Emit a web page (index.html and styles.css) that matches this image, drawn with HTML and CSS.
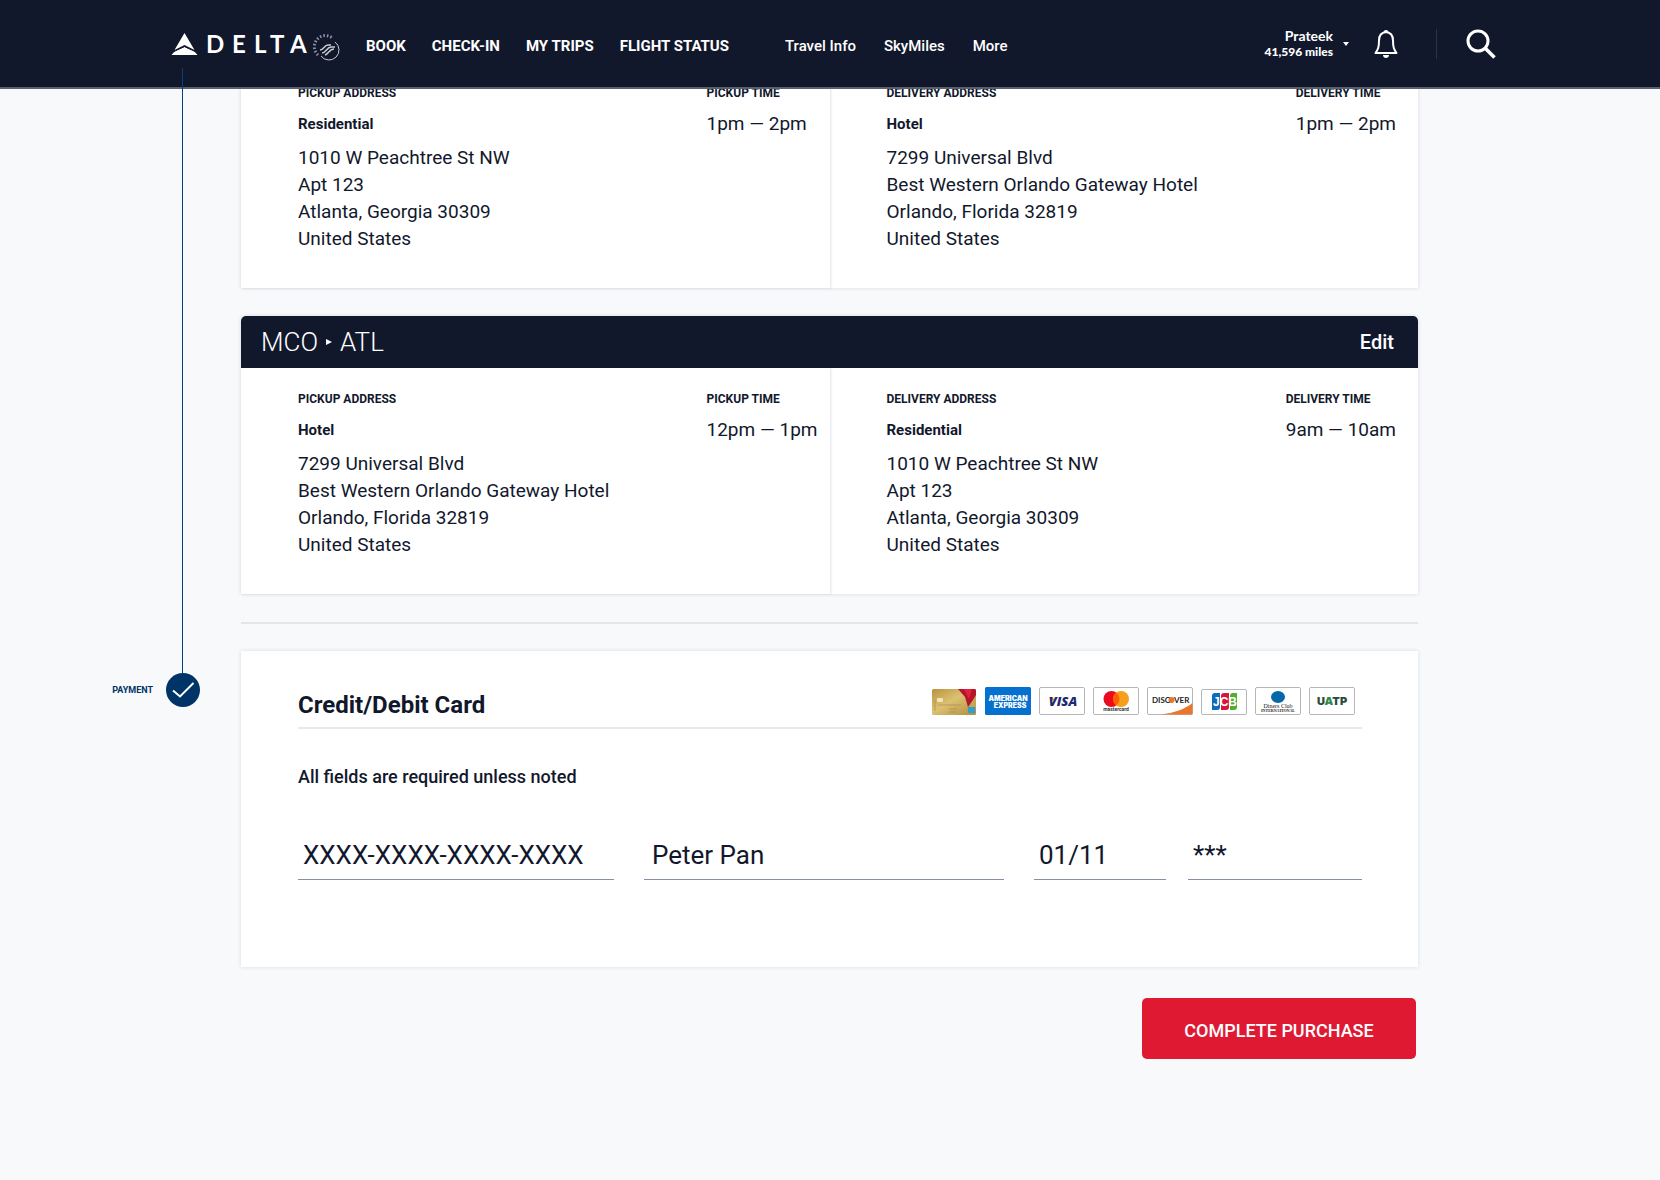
FILE: index.html
```html
<!DOCTYPE html>
<html lang="en">
<head>
<meta charset="utf-8">
<meta name="viewport" content="width=device-width, initial-scale=1">
<title>Delta – Baggage delivery payment</title>
<link rel="stylesheet" href="styles.css">
</head>
<body>
<header class="site-header">
  <a class="logo" href="#" aria-label="Delta home">
    <svg width="172" height="44" viewBox="0 0 172 44">
      <path d="M14.500 11 24.500 28 14.500 23 4.500 28z" fill="#fff"/>
      <path d="M1.500 33 5 29 14.500 25 24 29 27.500 33z" fill="#fff"/>
      <path d="M4 29.500 14.500 24.500 25 29.500" fill="none" stroke="#12182c" stroke-width="1"/>
      <text class="wordmark" x="36 62 84 100 120" y="31">DELTA</text>
      <g fill="none" stroke="#c6c9d1">
        <path d="M165 20A10 10 0 1 1 151 34" stroke-width="1"/>
        <path d="M148 33A10.500 10.500 0 0 1 163 16.500" stroke-width="3" stroke-dasharray="1.500 2" opacity=".7"/>
        <path d="M150 28c4 0 4-5 8-5h3M152 31c4 0 5-6 9-6h4M155 33c4-1 4-6 9-6" stroke-width="1.500"/>
      </g>
    </svg>
  </a>
  <nav class="nav nav-primary" aria-label="Primary">
    <a href="#">BOOK</a>
    <a href="#">CHECK-IN</a>
    <a href="#">MY TRIPS</a>
    <a href="#">FLIGHT STATUS</a>
  </nav>
  <nav class="nav nav-secondary" aria-label="Secondary">
    <a href="#">Travel Info</a>
    <a href="#">SkyMiles</a>
    <a href="#">More</a>
  </nav>
  <div class="tools">
    <button class="account" type="button">
      <span class="account-text"><span class="account-name">Prateek</span><span class="account-miles">41,596 miles</span></span>
      <svg width="6" height="4" viewBox="0 0 6 4"><path d="M0 0h6L3 4z" fill="#fff"/></svg>
    </button>
    <button class="icon-button" type="button" aria-label="Notifications">
      <svg width="24" height="30" viewBox="0 0 24 30">
        <path d="M12 3c-5 .5-7 4-7 8.500 0 7-1 9-3.500 12.500h21C20 20.500 19 18.500 19 11.500c0-4.500-2-8-7-8.500z" fill="none" stroke="#fff" stroke-width="2" stroke-linejoin="round"/>
        <path d="M9.500 3.500a2.500 2.500 0 0 1 5 0zM9 26h6c0 4-6 4-6 0z" fill="#fff"/>
      </svg>
    </button>
    <span class="tools-rule"></span>
    <button class="icon-button" type="button" aria-label="Search">
      <svg width="30" height="30" viewBox="0 0 30 30"><circle cx="12" cy="12" r="10" fill="none" stroke="#fff" stroke-width="3"/><path d="m19 19 9.500 9.500" stroke="#fff" stroke-width="3.500"/></svg>
    </button>
  </div>
</header>

<main class="checkout">
  <div class="track"></div>
  <div class="legs">
    <section class="leg">
      <div class="leg-body">
        <div class="stop">
          <div>
            <h3 class="label">PICKUP ADDRESS</h3>
            <p class="place">Residential</p>
            <address class="address">1010 W Peachtree St NW<br>Apt 123<br>Atlanta, Georgia 30309<br>United States</address>
          </div>
          <div class="slot slot-pickup"><h3 class="label">PICKUP TIME</h3><p class="time">1pm — 2pm</p></div>
        </div>
        <div class="stop">
          <div>
            <h3 class="label">DELIVERY ADDRESS</h3>
            <p class="place">Hotel</p>
            <address class="address">7299 Universal Blvd<br>Best Western Orlando Gateway Hotel<br>Orlando, Florida 32819<br>United States</address>
          </div>
          <div class="slot"><h3 class="label">DELIVERY TIME</h3><p class="time">1pm — 2pm</p></div>
        </div>
      </div>
    </section>

    <section class="leg">
      <div class="leg-head">
        <h2 class="route">MCO <svg width="6" height="8" viewBox="0 0 6 8" aria-label="to"><path d="M0 1v6l6-3z" fill="#fff"/></svg> ATL</h2>
        <button class="edit" type="button">Edit</button>
      </div>
      <div class="leg-body">
        <div class="stop">
          <div>
            <h3 class="label">PICKUP ADDRESS</h3>
            <p class="place">Hotel</p>
            <address class="address">7299 Universal Blvd<br>Best Western Orlando Gateway Hotel<br>Orlando, Florida 32819<br>United States</address>
          </div>
          <div class="slot slot-pickup"><h3 class="label">PICKUP TIME</h3><p class="time">12pm — 1pm</p></div>
        </div>
        <div class="stop">
          <div>
            <h3 class="label">DELIVERY ADDRESS</h3>
            <p class="place">Residential</p>
            <address class="address">1010 W Peachtree St NW<br>Apt 123<br>Atlanta, Georgia 30309<br>United States</address>
          </div>
          <div class="slot"><h3 class="label">DELIVERY TIME</h3><p class="time">9am — 10am</p></div>
        </div>
      </div>
    </section>
    <hr class="divider">
  </div>

  <div class="step">
    <span class="step-name">PAYMENT</span>
    <svg width="34" height="34" viewBox="0 0 34 34"><circle cx="17" cy="17" r="17" fill="#003366"/><path d="m7 17.500 7 6L27.500 10" fill="none" stroke="#fff" stroke-width="2"/></svg>
  </div>
  <form class="payment">
    <section class="card">
      <div class="card-head">
        <h2 class="card-title">Credit/Debit Card</h2>
        <div class="brands">
          <svg class="brand" width="46" height="28" viewBox="0 0 46 28" aria-label="Delta SkyMiles card">
            <defs><linearGradient id="gold" x2="1" y2="1"><stop offset="0" stop-color="#b8933f"/><stop offset=".45" stop-color="#dcc173"/><stop offset="1" stop-color="#b08a3c"/></linearGradient></defs>
            <rect x="1" y="2" width="44" height="26" rx="1.500" fill="url(#gold)"/>
            <path d="M27 2h17l1 1v6l-8 11-3-10z" fill="#b5152b"/><path d="m33 2 5 10 3-10z" fill="#e0223a"/><path d="m45 8-7 12h7z" fill="#c9a453"/>
            <rect x="6" y="11" width="6" height="4" rx="1" fill="#efe3b8"/><path d="M8 18h22M18 22h8M18 25h7M4 13v11" stroke="#a3864a" stroke-width="1" opacity=".6"/>
            <rect x="37" y="20" width="7" height="6" fill="#2d9fd0"/>
          </svg>
          <svg class="brand" width="46" height="28" viewBox="0 0 46 28">
            <rect width="46" height="28" rx="1.500" fill="#0670ce"/>
            <text class="b-amex" x="23" y="14" text-anchor="middle">AMERICAN</text><text class="b-amex" x="25" y="21" text-anchor="middle">EXPRESS</text>
          </svg>
          <svg class="brand" width="46" height="28" viewBox="0 0 46 28">
            <rect class="frame" x=".5" y=".5" width="45" height="27" rx="1.500"/>
            <path d="M10 10h4l2 5z" fill="#f2a21b"/><text class="b-visa" x="24" y="19" text-anchor="middle">VISA</text>
          </svg>
          <svg class="brand" width="46" height="28" viewBox="0 0 46 28">
            <rect class="frame" x=".5" y=".5" width="45" height="27" rx="1.500"/>
            <circle cx="18.500" cy="12" r="8" fill="#eb0a1e"/><circle cx="28" cy="12" r="8" fill="#f79e1b"/><path d="M23.200 5.600a8 8 0 0 1 0 12.800 8 8 0 0 1 0-12.800z" fill="#ff5f00"/>
            <text class="b-mc" x="23" y="24" text-anchor="middle">mastercard</text>
          </svg>
          <svg class="brand" width="46" height="28" viewBox="0 0 46 28">
            <rect class="frame" x=".5" y=".5" width="45" height="27" rx="1.500"/>
            <path d="M14 27.500C27 26 38 22 45.500 16v11.500z" fill="#e8762d"/>
            <circle cx="24.500" cy="13" r="3" fill="#e8762d"/>
            <text class="b-disc" x="5" y="16">DISC</text><text class="b-disc" x="27" y="16">VER</text>
          </svg>
          <svg class="brand" width="46" height="28" viewBox="0 0 46 28">
            <rect class="frame" x=".5" y="2.500" width="45" height="25" rx="1.500"/>
            <path d="M14 6h5v14q0 3-3 3h-5V9q0-3 3-3z" fill="#0e6db8"/><path d="M23 6h5v14q0 3-3 3h-5V9q0-3 3-3z" fill="#d7153a"/><path d="M32 6h4v14q0 3-3 3h-4V9q0-3 3-3z" fill="#4fae33"/>
            <text class="b-jcb" x="24" y="19" text-anchor="middle">JCB</text>
          </svg>
          <svg class="brand" width="46" height="28" viewBox="0 0 46 28">
            <rect class="frame" x=".5" y=".5" width="45" height="27" rx="1.500"/>
            <ellipse cx="23" cy="10" rx="7" ry="6" fill="#0568a8"/>
            <text class="b-diners" x="23" y="21" text-anchor="middle">Diners Club</text><text class="b-diners-sub" x="23" y="25" text-anchor="middle">INTERNATIONAL</text>
          </svg>
          <svg class="brand" width="46" height="28" viewBox="0 0 46 28">
            <rect class="frame" x=".5" y=".5" width="45" height="27" rx="1.500"/>
            <text class="b-uatp" x="23" y="18" text-anchor="middle">U<tspan fill="#2f8a4a">A</tspan>TP</text>
          </svg>
        </div>
      </div>
      <p class="note">All fields are required unless noted</p>
      <div class="fields">
        <label><input type="text" aria-label="Card number" value="XXXX-XXXX-XXXX-XXXX"></label>
        <label><input type="text" aria-label="Name on card" value="Peter Pan"></label>
        <label><input type="text" aria-label="Expiration date" value="01/11"></label>
        <label><input type="text" aria-label="Security code" value="***"></label>
      </div>
    </section>
    <button class="submit" type="submit">COMPLETE PURCHASE</button>
  </form>
</main>
</body>
</html>
```
FILE: styles.css
```css
:root {
  --navy: #12182c;
  --blue: #003366;
  --page: #f7f9fb;
  --shadow: 0 0 4px rgba(30, 50, 90, .14);
}

* { box-sizing: border-box; }

body {
  margin: 0;
  background: var(--page);
  color: var(--navy);
  font-family: Roboto, "Liberation Sans", sans-serif;
}

h2, h3, p { margin: 0; }
button { border: 0; padding: 0; background: none; color: inherit; font: inherit; cursor: pointer; }
svg { display: block; }

/* Header */
.site-header {
  position: sticky;
  top: 0;
  z-index: 2;
  display: flex;
  align-items: center;
  min-height: 89px;
  padding: 0 164px 0 170px;
  background: var(--navy);
  border-bottom: 2px solid #5a616e;
  color: #fff;
}
.logo { flex: none; width: 196px; }
.wordmark { font: 700 24px Lato, sans-serif; fill: #fff; }
.nav { display: flex; padding-top: 4px; font-size: 15px; line-height: 20px; white-space: nowrap; }
.nav a { color: inherit; text-decoration: none; }
.nav-primary { gap: 26px; font-weight: 700; }
.nav-secondary { gap: 28px; margin-left: 56px; font-weight: 500; }
.tools { display: flex; align-items: center; margin-left: auto; }
.account { display: flex; align-items: center; gap: 10px; }
.account-text { display: flex; flex-direction: column; padding-bottom: 2px; text-align: right; }
.account-name { font: 700 14px/17px Lato, sans-serif; }
.account-miles { font: 900 12px/15px Lato, sans-serif; }
.icon-button { margin-left: 25px; }
.tools-rule { width: 1px; height: 30px; margin: 0 4px 0 38px; background: #2c3245; }

/* Checkout layout: progress rail beside the content */
.checkout {
  display: grid;
  grid-template-columns: 241px minmax(0, 1fr);
  padding: 0 242px 120px 0;
}
.track {
  position: relative;
  z-index: 3;
  width: 1px;
  margin: -21px 58px -22px auto;
  background: #0a3f78;
}
.legs { display: grid; gap: 28px; margin-top: -27px; }

/* Trip legs */
.leg { box-shadow: var(--shadow); border-radius: 5px 5px 0 0; background: #fff; }
.leg-head {
  display: flex;
  align-items: center;
  justify-content: space-between;
  min-height: 52px;
  padding: 0 24px 0 20px;
  border-radius: 5px 5px 0 0;
  background: var(--navy);
  color: #fff;
}
.route { display: flex; align-items: center; gap: 8px; font-size: 26px; line-height: 30px; font-weight: 300; }
.edit { font-size: 20px; font-weight: 500; }
.leg-body { display: grid; grid-template-columns: 1fr 1fr; }
.stop {
  display: flex;
  justify-content: space-between;
  padding: 21px 22px 36px 57px;
}
.stop:first-child { padding-right: 14px; box-shadow: 1px 0 2px rgba(30, 50, 90, .14); }
.slot-pickup { width: 109px; }
.label { font-size: 12px; line-height: 20px; font-weight: 700; white-space: nowrap; }
.place { margin: 11px 0 10px; font-size: 15px; line-height: 20px; font-weight: 700; }
.time { margin-top: 11px; font-size: 19px; line-height: 20px; font-weight: 400; white-space: nowrap; }
.address { font-size: 19px; line-height: 27px; font-weight: 400; font-style: normal; }

.divider { width: 100%; height: 2px; margin: 0 0 27px; border: 0; background: #e3e5e8; }

/* Payment */
.step {
  display: flex;
  align-items: flex-start;
  justify-content: flex-end;
  gap: 13px;
  padding: 22px 41px 0 0;
}
.step-name { font-size: 9px; line-height: 34px; font-weight: 700; color: var(--blue); }
.step svg { position: relative; z-index: 4; }
.payment { display: flex; flex-direction: column; }
.card { padding: 33px 56px 87px 57px; background: #fff; box-shadow: var(--shadow); }
.card-head {
  display: flex;
  justify-content: space-between;
  padding-right: 7px;
  border-bottom: 2px solid #e9e9ea;
}
.card-title { font-size: 24px; line-height: 43px; font-weight: 700; }
.brands { display: flex; gap: 8px; padding-top: 3px; }
.frame { fill: #fff; stroke: #b4b6ba; }
.b-amex { font: 900 7px Inter, sans-serif; fill: #fff; }
.b-visa { font: italic 900 13px "Open Sans", sans-serif; fill: #20296f; }
.b-mc { font: 700 5px Roboto, sans-serif; fill: #333; }
.b-disc { font: 700 8px Lato, sans-serif; fill: #222; }
.b-jcb { font: 700 12px "Liberation Sans", sans-serif; fill: #fff; }
.b-diners { font: 6px "Liberation Serif", serif; fill: #222; }
.b-diners-sub { font: 700 4px "Liberation Serif", serif; fill: #222; }
.b-uatp { font: 900 11px Inter, sans-serif; fill: #2b4a3a; }
.note { margin-top: 37px; font-size: 18px; line-height: 22px; font-weight: 500; }

.fields {
  display: grid;
  grid-template-columns: 346fr 390fr 154fr 174fr;
  margin-top: 42px;
}
.fields label { display: block; padding-right: 30px; }
.fields label:nth-child(3) { padding-right: 22px; }
.fields label:last-child { padding-right: 0; }
.fields input {
  display: block;
  width: 100%;
  height: 50px;
  padding: 0 5px;
  border: 0;
  border-bottom: 1px solid #8590a8;
  border-radius: 0;
  background: transparent;
  color: var(--navy);
  font: 400 26px Roboto, sans-serif;
}
.fields label:nth-child(2) input { padding-left: 8px; }

.submit {
  align-self: flex-end;
  width: 274px;
  max-width: 100%;
  margin: 31px 2px 0 0;
  padding: 20px 16px 15px;
  border-radius: 5px;
  background: #e01933;
  color: #fff;
  font-size: 18px;
  line-height: 26px;
  font-weight: 500;
}
```
